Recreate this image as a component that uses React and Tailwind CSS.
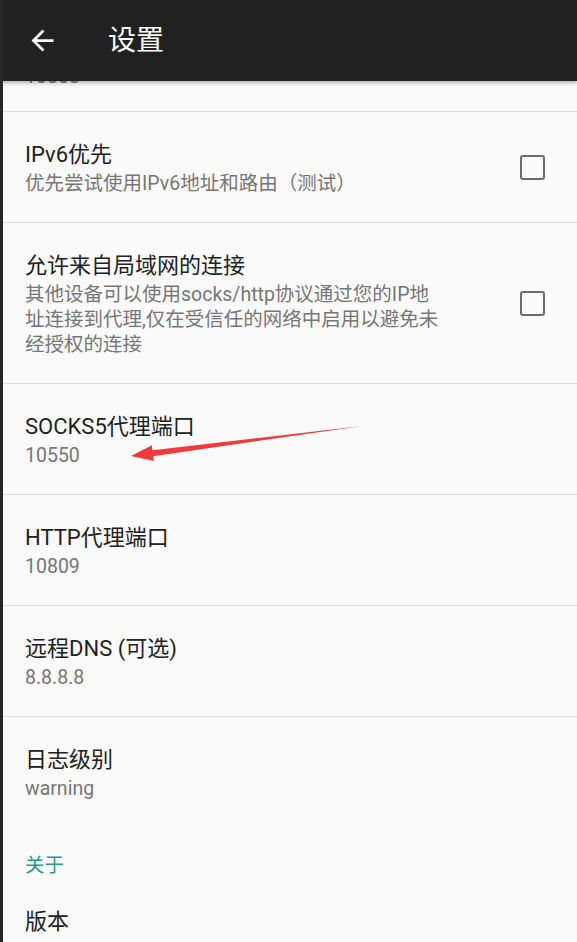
import React from "react";

const font = { fontFamily: '"Roboto", "Noto Sans CJK SC", sans-serif' };

function Checkbox() {
  return (
    <div className="w-[25px] h-[25px] rounded-[3px] border-[2.5px] border-[#6b6b6b] shrink-0" />
  );
}

function Item({ title, summary, checkbox, divider = true }) {
  return (
    <div className={`flex items-center pl-[22px] pr-[32px] pt-[27px] pb-[26px] ${divider ? "border-b border-[#dedede]" : ""}`}>
      <div className="flex-1 min-w-0 pr-[80px]">
        <div className="text-[22px] leading-[32px] text-[#212121]">{title}</div>
        <div className="text-[19.5px] leading-[25px] text-[#767676]">{summary}</div>
      </div>
      {checkbox && <Checkbox />}
    </div>
  );
}

export default function App() {
  return (
    <div className="relative w-[577px] h-[942px] overflow-hidden bg-[#fafafa] border-l-[3px] border-[#262626]" style={font}>
      <div className="relative z-10 h-[81px] bg-[#212121] flex items-center shadow-[0_2px_4px_rgba(0,0,0,0.3)] -ml-[3px]">
        <svg width="33" height="33" viewBox="0 0 24 24" className="ml-[26px] fill-white">
          <path d="M20 11H7.83l5.59-5.59L12 4l-8 8 8 8 1.41-1.41L7.83 13H20v-2z" />
        </svg>
        <div className="ml-[49px] text-[28px] text-white leading-none">设置</div>
      </div>
      <div className="h-[31px] overflow-hidden border-b border-[#dedede] pl-[22px]">
        <div className="mt-[-17px] text-[19.5px] leading-[25px] text-[#767676]">10808</div>
      </div>
      <Item title="IPv6优先" summary="优先尝试使用IPv6地址和路由（测试）" checkbox />
      <Item
        title="允许来自局域网的连接"
        summary="其他设备可以使用socks/http协议通过您的IP地址连接到代理,仅在受信任的网络中启用以避免未经授权的连接"
        checkbox
      />
      <Item title="SOCKS5代理端口" summary="10550" />
      <Item title="HTTP代理端口" summary="10809" />
      <Item title="远程DNS (可选)" summary="8.8.8.8" />
      <Item title="日志级别" summary="warning" divider={false} />
      <div className="pl-[22px] pt-[26px] text-[19.5px] leading-[25px] text-[#1a9e8f]">关于</div>
      <div className="pl-[22px] pt-[28px] text-[22px] leading-[32px] text-[#212121]">版本</div>
      <svg className="absolute left-[-3px] top-0 pointer-events-none" width="577" height="942">
        <polygon points="131,456 151.8,445.3 152.4,450.2 362,426 153.2,456.2 153.8,461.1" fill="#ef3b3b" />
      </svg>
    </div>
  );
}
